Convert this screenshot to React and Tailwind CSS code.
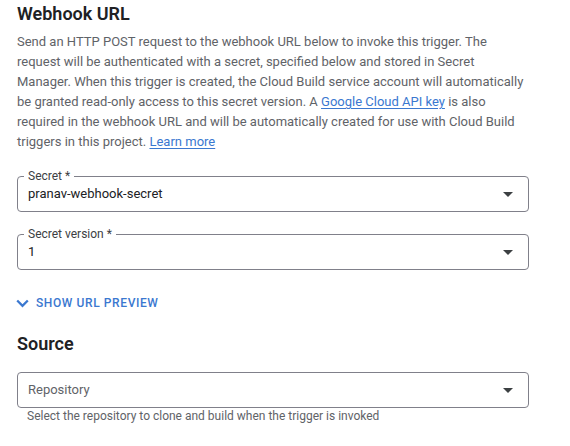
export default function App() {
  const font = { fontFamily: "Roboto, 'Liberation Sans', sans-serif" };
  const Arrow = () => (
    <svg width="10" height="5" viewBox="0 0 10 5" className="shrink-0">
      <path d="M0 0 L10 0 L5 5 Z" fill="#3c4043" />
    </svg>
  );
  const Select = ({ label, value, placeholder, className }) => (
    <div className={`relative h-9 rounded-[4px] border border-[#80808a] flex items-center pl-[10px] pr-[15px] ${className}`}>
      {label && (
        <span className="absolute left-[6px] top-[-9px] bg-white px-1 text-[12px] leading-4 text-[#3c4043]">
          {label}
        </span>
      )}
      <span className={`flex-1 text-[13px] leading-5 ${placeholder ? "text-[#5f6368]" : "text-[#202124]"}`}>
        {value}
      </span>
      <Arrow />
    </div>
  );
  return (
    <div className="w-[570px] h-[446px] bg-white overflow-hidden" style={font}>
      <div className="pl-[17px] w-[529px]">
        <h2 className="pt-[2px] text-[18px] leading-6 font-semibold text-[#202124]">Webhook URL</h2>
        <p className="mt-[6px] text-[13px] leading-5 text-[#5f6368] pr-[4px]">
          Send an HTTP POST request to the webhook URL below to invoke this trigger. The request will be authenticated with a secret, specified below and stored in Secret Manager. When this trigger is created, the Cloud Build service account will automatically be granted read-only access to this secret version. A{" "}
          <a className="text-[#3b78d0] underline underline-offset-2">Google Cloud API key</a> is also required in the webhook URL and will be automatically created for use with Cloud Build triggers in this project.{" "}
          <a className="text-[#3b78d0] underline underline-offset-2">Learn more</a>
        </p>
        <Select className="mt-[24px]" label="Secret *" value="pranav-webhook-secret" />
        <Select className="mt-[22px]" label="Secret version *" value="1" />
        <div className="mt-[25px] flex items-center gap-[7px] h-4 text-[#3b78d0]">
          <svg width="13" height="9" viewBox="0 0 13 9" className="-ml-[1px]">
            <path d="M1.2 1.5 L6.5 6.8 L11.8 1.5" fill="none" stroke="#3b78d0" strokeWidth="2.3" />
          </svg>
          <span className="text-[12px] leading-4 font-medium tracking-[0.6px]">SHOW URL PREVIEW</span>
        </div>
        <h2 className="mt-[21px] text-[18px] leading-6 font-semibold text-[#202124]">Source</h2>
        <Select className="mt-4" value="Repository" placeholder />
        <div className="pl-[10px] text-[12px] leading-4 text-[#5f6368]">
          Select the repository to clone and build when the trigger is invoked
        </div>
      </div>
    </div>
  );
}
